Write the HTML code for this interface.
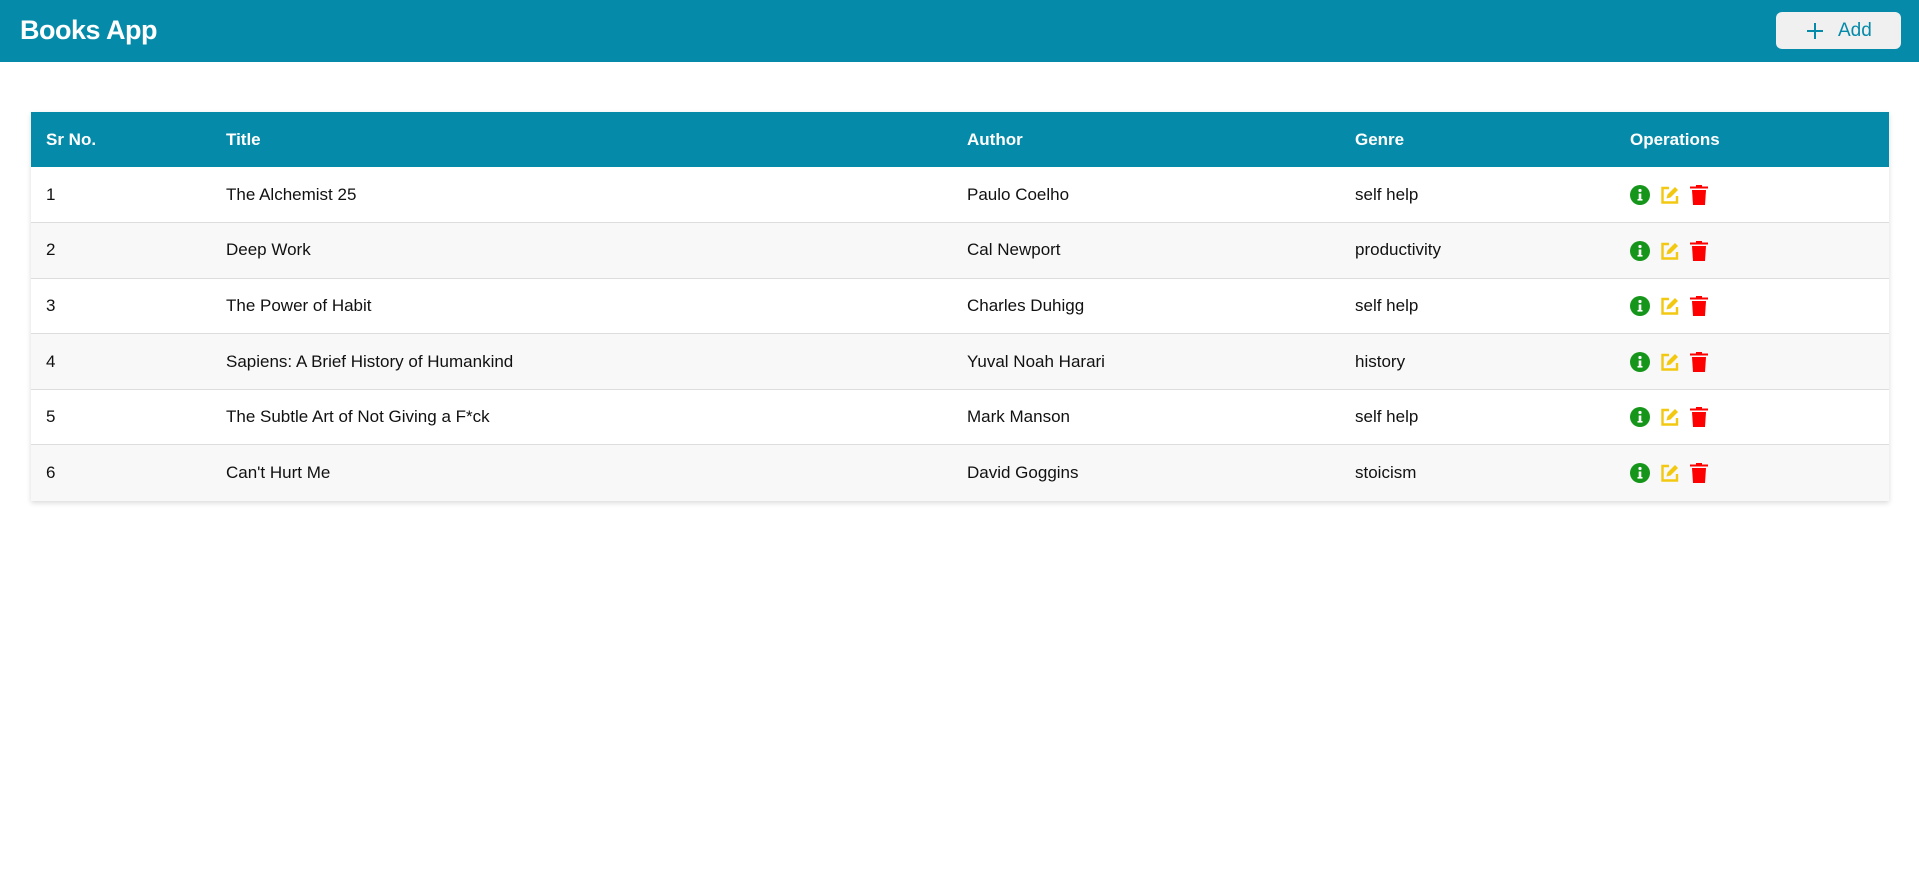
<!DOCTYPE html>
<html><head><meta charset="utf-8"><style>
*{box-sizing:border-box;margin:0;padding:0}
body{width:1919px;height:871px;background:#fff;font-family:"Liberation Sans",sans-serif;color:#111;overflow:hidden;position:relative}
.top{height:62px;background:#058ba9;position:relative}
.top h1{position:absolute;left:20px;top:15px;font-size:27px;color:#fff;font-weight:bold;letter-spacing:-0.5px}
.btn{position:absolute;left:1776px;top:12px;width:125px;height:37px;background:#f0f0f0;border-radius:6px;color:#058ba9;font-size:19px}
.btn span{position:absolute;left:62px;top:8px}
.btn svg{position:absolute;left:30px;top:10px}
table{position:absolute;left:31px;top:112px;width:1858px;border-collapse:collapse;box-shadow:0 2px 5px rgba(0,0,0,.15);font-size:17px}
th{background:#058ba9;color:#fff;text-align:left;height:55px;font-weight:bold;font-size:17px}
td{height:55.6px;border-bottom:1px solid #ddd}
tr:last-child td{border-bottom:none}
tbody tr:nth-child(even) td{background:#f8f8f8}
th:nth-child(1),td:nth-child(1){padding-left:15px;width:195px}
th:nth-child(2){width:741px}
th:nth-child(3){width:388px}
th:nth-child(4){width:275px}
.ops svg{vertical-align:middle;margin-right:10px}
</style></head><body>
<div class="top"><h1>Books App</h1>
<div class="btn"><svg width="18" height="18" viewBox="0 0 18 18"><path d="M9 1V17M1 9H17" stroke="#058ba9" stroke-width="2"/></svg><span>Add</span></div></div>
<table><thead><tr><th>Sr No.</th><th>Title</th><th>Author</th><th>Genre</th><th>Operations</th></tr></thead><tbody>
<tr><td>1</td><td>The Alchemist 25</td><td>Paulo Coelho</td><td>self help</td><td class="ops">OPS</td></tr>
<tr><td>2</td><td>Deep Work</td><td>Cal Newport</td><td>productivity</td><td class="ops">OPS</td></tr>
<tr><td>3</td><td>The Power of Habit</td><td>Charles Duhigg</td><td>self help</td><td class="ops">OPS</td></tr>
<tr><td>4</td><td>Sapiens: A Brief History of Humankind</td><td>Yuval Noah Harari</td><td>history</td><td class="ops">OPS</td></tr>
<tr><td>5</td><td>The Subtle Art of Not Giving a F*ck</td><td>Mark Manson</td><td>self help</td><td class="ops">OPS</td></tr>
<tr><td>6</td><td>Can't Hurt Me</td><td>David Goggins</td><td>stoicism</td><td class="ops">OPS</td></tr>
</tbody></table>
<script>
var ops='<svg width="20" height="20" viewBox="0 0 20 20"><circle cx="10" cy="10" r="10" fill="#15961a"/><rect x="8.7" y="8.5" width="2.6" height="7" fill="#fff"/><rect x="7.5" y="14" width="5" height="1.6" fill="#fff"/><circle cx="10" cy="5.5" r="1.6" fill="#fff"/></svg><svg width="20" height="20" viewBox="0 0 20 20"><path d="M9 3H2.5V17.5H17V11" fill="none" stroke="#f2c811" stroke-width="2.4"/><path d="M6.5 13.5L7.5 9.5L15 2L18 5L10.5 12.5Z" fill="#f2c811"/></svg><svg width="18" height="20" viewBox="0 0 18 20"><rect x="0" y="1.5" width="18" height="2" fill="#f00"/><rect x="6" y="0" width="6" height="2" fill="#f00"/><path d="M2 5H16L15 20H3Z" fill="#f00"/></svg>';
document.querySelectorAll('.ops').forEach(function(e){e.innerHTML=ops});
</script>
</body></html>
